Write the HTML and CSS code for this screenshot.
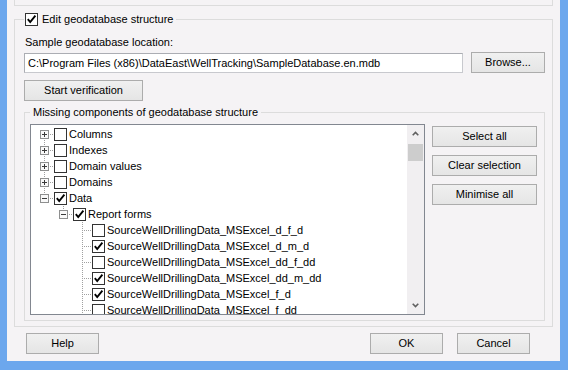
FILE: index.html
```html
<!DOCTYPE html>
<html lang="en">

<head>
    <meta charset="UTF-8">
    <meta name="viewport" content="width=device-width, initial-scale=1.0">
    <title>Geodatabase structure</title>
    <link rel="stylesheet" href="styles.css">
</head>

<body>
    <div class="window">
        <div class="prev-group"></div>

        <fieldset class="group outer">
            <legend class="outer-title">
                <span class="check"><svg viewBox="0 0 11 11" width="11" height="11"><path d="M1.8 5.2 4.2 8 9.4 1.6" /></svg></span>
                <span>Edit geodatabase structure</span>
            </legend>

            <label class="field-label">Sample geodatabase location:</label>
            <div class="path-row">
                <div class="textbox">C:\Program Files (x86)\DataEast\WellTracking\SampleDatabase.en.mdb</div>
                <button class="btn browse">Browse...</button>
            </div>
            <button class="btn verify">Start verification</button>

            <fieldset class="group inner">
                <legend class="inner-title">Missing components of geodatabase structure</legend>
                <div class="inner-body">
                    <div class="tree">
                        <div class="tree-rows">
                            <div class="row">
                                <span class="twig first"><svg class="exp" viewBox="0 0 9 9" width="9" height="9"><rect x=".5" y=".5" width="8" height="8" /><path d="M2 4.5h5M4.5 2v5" /></svg></span>
                                <span class="check"></span>
                                <span class="label">Columns</span>
                            </div>
                            <div class="row">
                                <span class="twig mid"><svg class="exp" viewBox="0 0 9 9" width="9" height="9"><rect x=".5" y=".5" width="8" height="8" /><path d="M2 4.5h5M4.5 2v5" /></svg></span>
                                <span class="check"></span>
                                <span class="label">Indexes</span>
                            </div>
                            <div class="row">
                                <span class="twig mid"><svg class="exp" viewBox="0 0 9 9" width="9" height="9"><rect x=".5" y=".5" width="8" height="8" /><path d="M2 4.5h5M4.5 2v5" /></svg></span>
                                <span class="check"></span>
                                <span class="label">Domain values</span>
                            </div>
                            <div class="row">
                                <span class="twig mid"><svg class="exp" viewBox="0 0 9 9" width="9" height="9"><rect x=".5" y=".5" width="8" height="8" /><path d="M2 4.5h5M4.5 2v5" /></svg></span>
                                <span class="check"></span>
                                <span class="label">Domains</span>
                            </div>
                            <div class="row">
                                <span class="twig last"><svg class="exp" viewBox="0 0 9 9" width="9" height="9"><rect x=".5" y=".5" width="8" height="8" /><path d="M2 4.5h5" /></svg></span>
                                <span class="check"><svg viewBox="0 0 11 11" width="11" height="11"><path d="M1.8 5.2 4.2 8 9.4 1.6" /></svg></span>
                                <span class="label">Data</span>
                            </div>
                            <div class="row">
                                <span class="twig"></span>
                                <span class="twig last"><svg class="exp" viewBox="0 0 9 9" width="9" height="9"><rect x=".5" y=".5" width="8" height="8" /><path d="M2 4.5h5" /></svg></span>
                                <span class="check"><svg viewBox="0 0 11 11" width="11" height="11"><path d="M1.8 5.2 4.2 8 9.4 1.6" /></svg></span>
                                <span class="label">Report forms</span>
                            </div>
                            <div class="row">
                                <span class="twig"></span><span class="twig"></span>
                                <span class="twig mid"></span>
                                <span class="check"></span>
                                <span class="label">SourceWellDrillingData_MSExcel_d_f_d</span>
                            </div>
                            <div class="row">
                                <span class="twig"></span><span class="twig"></span>
                                <span class="twig mid"></span>
                                <span class="check"><svg viewBox="0 0 11 11" width="11" height="11"><path d="M1.8 5.2 4.2 8 9.4 1.6" /></svg></span>
                                <span class="label">SourceWellDrillingData_MSExcel_d_m_d</span>
                            </div>
                            <div class="row">
                                <span class="twig"></span><span class="twig"></span>
                                <span class="twig mid"></span>
                                <span class="check"></span>
                                <span class="label">SourceWellDrillingData_MSExcel_dd_f_dd</span>
                            </div>
                            <div class="row">
                                <span class="twig"></span><span class="twig"></span>
                                <span class="twig mid"></span>
                                <span class="check"><svg viewBox="0 0 11 11" width="11" height="11"><path d="M1.8 5.2 4.2 8 9.4 1.6" /></svg></span>
                                <span class="label">SourceWellDrillingData_MSExcel_dd_m_dd</span>
                            </div>
                            <div class="row">
                                <span class="twig"></span><span class="twig"></span>
                                <span class="twig mid"></span>
                                <span class="check"><svg viewBox="0 0 11 11" width="11" height="11"><path d="M1.8 5.2 4.2 8 9.4 1.6" /></svg></span>
                                <span class="label">SourceWellDrillingData_MSExcel_f_d</span>
                            </div>
                            <div class="row">
                                <span class="twig"></span><span class="twig"></span>
                                <span class="twig mid"></span>
                                <span class="check"></span>
                                <span class="label">SourceWellDrillingData_MSExcel_f_dd</span>
                            </div>
                        </div>
                        <div class="scrollbar">
                            <div class="arrow"><svg viewBox="0 0 7 5" width="7" height="5"><path d="M.7 4.2 3.5 1.4 6.3 4.2" /></svg></div>
                            <div class="thumb"></div>
                            <div class="track"></div>
                            <div class="arrow"><svg viewBox="0 0 7 5" width="7" height="5"><path d="M.7 .8 3.5 3.6 6.3 .8" /></svg></div>
                        </div>
                    </div>
                    <div class="side-buttons">
                        <button class="btn">Select all</button>
                        <button class="btn">Clear selection</button>
                        <button class="btn">Minimise all</button>
                    </div>
                </div>
            </fieldset>
        </fieldset>

        <div class="footer">
            <button class="btn">Help</button>
            <div class="footer-right">
                <button class="btn">OK</button>
                <button class="btn">Cancel</button>
            </div>
        </div>
    </div>
</body>

</html>
```

FILE: styles.css
```css
* {
    box-sizing: border-box;
}

body {
    margin: 0;
    width: 568px;
    height: 370px;
    overflow: hidden;
    background-color: #6ca7ed;
    font-family: "Liberation Sans", Arial, sans-serif;
    font-size: 11px;
    color: #000000;
}

.window {
    margin-left: 7px;
    width: 553px;
    height: 361px;
    background-color: #f5f3f5;
    display: flex;
    flex-direction: column;
}

.prev-group {
    margin-left: 7px;
    width: 539px;
    height: 6px;
    border: 1px solid #dcdcdc;
    border-top: none;
    flex-shrink: 0;
}

fieldset.group {
    min-width: 0;
    border: 1px solid #dcdcdc;
}

/* outer group box */
.outer {
    margin: 7px 0 0 7px;
    width: 539px;
    padding: 9px 7px 5px 9px;
}

.outer-title {
    display: flex;
    align-items: center;
    gap: 4px;
    height: 13px;
    padding: 0 3px 0 1px;
    line-height: 13px;
}

.check {
    width: 13px;
    height: 13px;
    flex-shrink: 0;
    border: 1px solid #333333;
    background-color: #ffffff;
    display: flex;
    align-items: center;
    justify-content: center;
}

.check svg {
    display: block;
    fill: none;
    stroke: #000000;
    stroke-width: 1.9;
}

.field-label {
    display: block;
    padding-left: 1px;
    line-height: 15px;
}

.path-row {
    display: flex;
    gap: 8px;
    margin-top: 2px;
    height: 21px;
}

.textbox {
    width: 439px;
    height: 20px;
    margin-top: 1px;
    padding: 0 3px;
    border: 1px solid #abadb3;
    border-right-color: #c8c9ce;
    border-bottom-color: #c8c9ce;
    background-color: #ffffff;
    line-height: 18px;
    white-space: nowrap;
    overflow: hidden;
}

.btn {
    height: 21px;
    padding: 0;
    font-family: inherit;
    font-size: 11px;
    color: #000000;
    border: 1px solid #acacac;
    border-radius: 0;
    background: linear-gradient(#f0f0f0, #e5e5e5);
    line-height: 19px;
}

.browse {
    width: 74px;
}

.verify {
    display: block;
    width: 119px;
    margin-top: 7px;
}

/* inner group box */
.inner {
    margin: 4px 0 0 0;
    width: 521px;
    padding: 4px 0 5px 5px;
}

.inner-title {
    padding: 0 3px;
    line-height: 15px;
}

.inner-body {
    display: flex;
    align-items: flex-start;
    gap: 7px;
}

.tree {
    width: 395px;
    height: 191px;
    border: 1px solid #828790;
    background-color: #ffffff;
    display: flex;
    overflow: hidden;
}

.tree-rows {
    flex-grow: 1;
    padding: 1px 0 0 4px;
    overflow: hidden;
}

.row {
    display: flex;
    align-items: flex-start;
    height: 16px;
    white-space: nowrap;
}

.row .check {
    margin-top: 2px;
}

.row .label {
    margin-left: 2px;
    line-height: 16px;
}

.twig {
    width: 19px;
    height: 16px;
    flex-shrink: 0;
    background-repeat: no-repeat;
}

.twig.first,
.twig.mid,
.twig.last {
    background-image:
        repeating-linear-gradient(to bottom, #a0a0a0 0 1px, transparent 1px 2px),
        repeating-linear-gradient(to right, #a0a0a0 0 1px, transparent 1px 2px);
}

.twig.first {
    background-size: 1px 8px, 10px 1px;
    background-position: 9px 8px, 9px 8px;
}

.twig.mid {
    background-size: 1px 16px, 10px 1px;
    background-position: 9px 0, 9px 8px;
}

.twig.last {
    background-size: 1px 9px, 10px 1px;
    background-position: 9px 0, 9px 8px;
}

.exp {
    display: block;
    margin: 4px 0 0 5px;
}

.exp rect {
    fill: #f9f9f9;
    stroke: #8e8f8f;
}

.exp path {
    stroke: #3a3a3a;
}

.scrollbar {
    width: 17px;
    flex-shrink: 0;
    background-color: #f1eff1;
    display: flex;
    flex-direction: column;
}

.arrow {
    height: 17px;
    display: flex;
    align-items: center;
    justify-content: center;
}

.arrow svg {
    display: block;
    fill: none;
    stroke: #606060;
    stroke-width: 1.6;
}

.thumb {
    height: 17px;
    margin: 2px 1px 0 1px;
    background-color: #cdcdcd;
}

.track {
    flex-grow: 1;
}

.side-buttons {
    display: flex;
    flex-direction: column;
    gap: 8px;
    margin-top: 2px;
}

.side-buttons .btn {
    width: 105px;
}

.footer {
    display: flex;
    justify-content: space-between;
    padding: 6px 30px 0 19px;
}

.footer-right {
    display: flex;
    gap: 14px;
}

.footer .btn {
    width: 73px;
}
```
